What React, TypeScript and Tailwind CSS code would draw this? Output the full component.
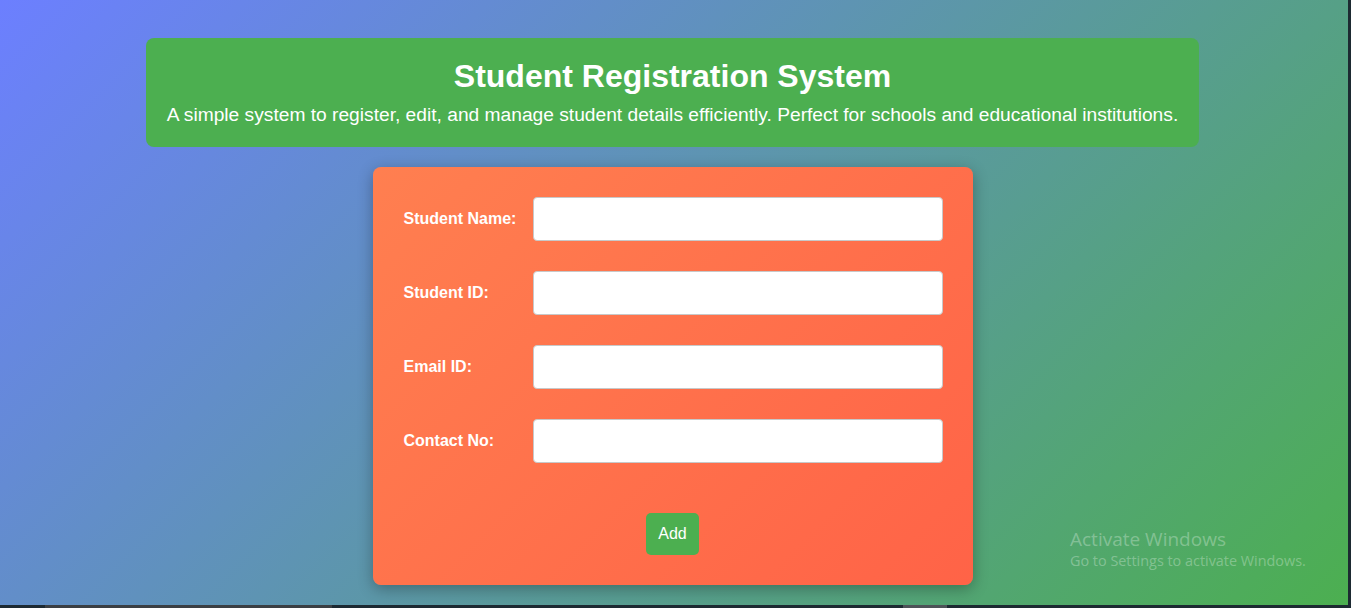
import { useState } from 'react';

const fields = [
  { key: 'name', label: 'Student Name:' },
  { key: 'id', label: 'Student ID:' },
  { key: 'email', label: 'Email ID:' },
  { key: 'contact', label: 'Contact No:' },
];

export default function App() {
  const [form, setForm] = useState<Record<string, string>>({ name: '', id: '', email: '', contact: '' });

  return (
    <div className="flex h-[608px] w-full overflow-hidden bg-[#1d2a32] font-['Liberation_Sans',Arial,sans-serif]">
      <div className="flex flex-1 flex-col">
        <main className="relative h-[605px] bg-[linear-gradient(135deg,#6c7fff,#4caf50)] pr-[3px] pt-[38px]">
          {/* Header */}
          <header className="mx-auto w-[1053px] rounded-lg bg-[#4caf50] pt-5 pb-[21px] text-center text-white">
            <h1 className="text-[32px] font-bold leading-[37px]">Student Registration System</h1>
            <p className="mt-[9px] text-[19.2px] leading-[22px]">
              A simple system to register, edit, and manage student details efficiently. Perfect for schools and educational institutions.
            </p>
          </header>

          {/* Form card */}
          <form
            onSubmit={(e) => e.preventDefault()}
            className="mx-auto mt-5 flex w-[600px] flex-col rounded-lg bg-[linear-gradient(135deg,#ff7f50,#ff6347)] p-[30px] shadow-[0_4px_15px_rgba(0,0,0,0.3)]"
          >
            <div className="flex flex-col gap-[30px]">
              {fields.map((f) => (
                <div key={f.key} className="flex items-center">
                  <label className="w-[130px] shrink-0 pl-px text-[16px] font-bold text-white">{f.label}</label>
                  <input
                    type="text"
                    value={form[f.key]}
                    onChange={(e) => setForm({ ...form, [f.key]: e.target.value })}
                    className="h-[44px] flex-1 rounded-[4px] border border-[#c8c8c8] bg-white px-2 text-[16px] outline-none"
                  />
                </div>
              ))}
            </div>
            <button
              type="submit"
              className="mx-auto mt-[50px] rounded-[5px] bg-[#4caf50] px-3 py-3 text-[16px] leading-[18px] text-white"
            >
              Add
            </button>
          </form>

          {/* Windows watermark */}
          <div className="pointer-events-none absolute left-[1070px] top-[527px] font-['Open_Sans',sans-serif] text-white/30">
            <div className="text-[19px] leading-[24px]">Activate Windows</div>
            <div className="text-[14.4px] leading-[20px]">Go to Settings to activate Windows.</div>
          </div>
        </main>
        <div className="relative h-[3px] bg-[#1d2a32]">
          <div className="absolute left-[45px] top-0 h-[3px] w-[287px] bg-[#3b3f43]" />
          <div className="absolute left-[903px] top-0 h-[3px] w-[44px] bg-[#4d5358]" />
        </div>
      </div>
      <div className="w-[3px] bg-[#1d2a32]" />
    </div>
  );
}
